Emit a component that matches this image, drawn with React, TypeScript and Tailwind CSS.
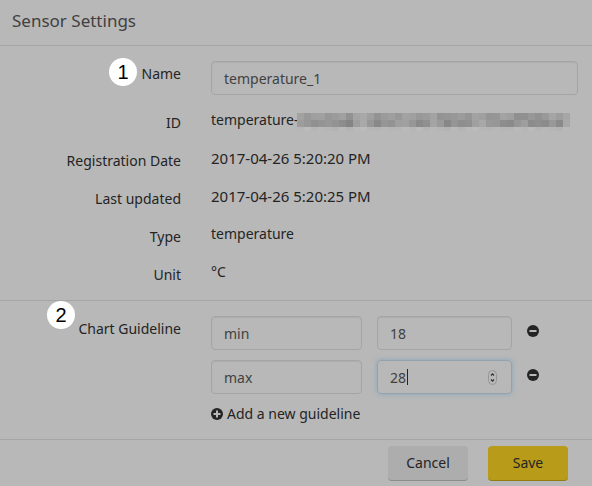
import type { ReactNode } from "react";

const MOSAIC_TOP = "a2 99 9f a0 97 9b a0 91 a4 a8 9f 93 9b 9f 98 a2 a0 98 9b a3 93 95 98 9c 95 a2 9f 95 96 a3 9f 8f 90 98 92 99 a5 9d a6".split(" ");
const MOSAIC_BOTTOM = "9d 97 90 94 97 93 8d 84 9e a9 97 89 96 93 9f a0 97 8a 90 a4 9a 87 95 8e 90 a0 a8 99 97 8d 8a 96 9e 8c 8f 8b 98 8a a8".split(" ");
const MOSAIC_FADE = "b6 bb b5 b8 b6 b3 b9 b4 b9 bb b6 b5 b8 b5 b6 ba".split(" ");

const fieldClass =
  "block h-[34px] w-full min-w-0 appearance-none rounded border border-[#a5a5a5] bg-transparent px-3 text-sm text-[#414141] shadow-[inset_0_1px_1px_rgba(0,0,0,0.06)] outline-none [&::-webkit-inner-spin-button]:appearance-none";

function Badge({ children, className }: { children: ReactNode; className: string }) {
  return (
    <span
      className={`absolute flex size-7 items-center justify-center rounded-full bg-white font-['Liberation_Sans',sans-serif] text-xl text-black ${className}`}
    >
      {children}
    </span>
  );
}

function InfoRow({ label, children }: { label: string; children: ReactNode }) {
  return (
    <div className="mb-[15px] flex gap-[30px]">
      <dt className="w-[181px] shrink-0 pt-[3px] text-right">{label}</dt>
      <dd className="flex min-w-0 flex-1">{children}</dd>
    </div>
  );
}

function RedactedText() {
  return (
    <svg className="mt-[3px] -ml-0.5 h-[18px] w-[273px] shrink-0" viewBox="0 0 273 18" shapeRendering="crispEdges" aria-hidden="true">
      {MOSAIC_TOP.map((_, i) => (
        <g key={i}>
          <rect x={i * 7} y="0" width="7" height="7" fill={`#${MOSAIC_TOP[i].repeat(3)}`} />
          <rect x={i * 7} y="7" width="7" height="7" fill={`#${MOSAIC_BOTTOM[i].repeat(3)}`} />
          <rect x={i * 7} y="14" width="7" height="4" fill={`#${MOSAIC_FADE[i % 16].repeat(3)}`} />
        </g>
      ))}
    </svg>
  );
}

function CircleIcon({ plus = false }: { plus?: boolean }) {
  return (
    <svg className="size-3 shrink-0" viewBox="0 0 12 12" aria-hidden="true">
      <circle cx="6" cy="6" r="6" fill="#242424" />
      <rect x="2.5" y="5" width="7" height="2" fill="#b8b8b8" />
      {plus && <rect x="5" y="2.5" width="2" height="7" fill="#b8b8b8" />}
    </svg>
  );
}

function RemoveButton({ name }: { name: string }) {
  return (
    <button type="button" aria-label={`Remove ${name}`} className="flex h-[30px] items-center self-start">
      <CircleIcon />
    </button>
  );
}

export default function App() {
  return (
    <form className="min-h-screen bg-[#b8b8b8] font-['Noto_Sans','Open_Sans',sans-serif] text-sm/5 text-[#242424]">
      <header className="border-b border-[#a5a5a5] px-3 pt-[7px] pb-2.5">
        <h1 className="text-[17px]/7 text-[#414141]">Sensor Settings</h1>
      </header>

      <section className="relative border-b border-[#a5a5a5] pt-[15px] pr-3.5">
        <Badge className="top-3 left-[109px]">1</Badge>
        <div className="mb-[15px] flex gap-[30px]">
          <label htmlFor="name" className="w-[181px] shrink-0 pt-[3px] text-right">
            Name
          </label>
          <div className="min-w-0 flex-1">
            <input id="name" type="text" defaultValue="temperature_1" className={fieldClass} />
          </div>
        </div>
        <dl>
          <InfoRow label="ID">
            <span>temperature-</span>
            <RedactedText />
          </InfoRow>
          <InfoRow label="Registration Date">
            <time className="text-[15px]">2017-04-26 5:20:20 PM</time>
          </InfoRow>
          <InfoRow label="Last updated">
            <time className="text-[15px]">2017-04-26 5:20:25 PM</time>
          </InfoRow>
          <InfoRow label="Type">temperature</InfoRow>
          <InfoRow label="Unit">°C</InfoRow>
        </dl>
      </section>

      <section className="relative flex gap-[30px] border-b border-[#a5a5a5] pt-[15px] pr-3.5 pb-[15px]">
        <Badge className="top-0 left-[47px]">2</Badge>
        <h2 className="w-[181px] shrink-0 pt-[3px] text-right">Chart Guideline</h2>
        <div className="min-w-0 flex-1">
          <div className="grid grid-cols-[151fr_135fr_51fr] gap-x-[15px] gap-y-2.5">
            <input type="text" aria-label="First guideline name" defaultValue="min" className={fieldClass} />
            <input type="number" aria-label="First guideline value" defaultValue="18" className={fieldClass} />
            <RemoveButton name="min" />
            <input type="text" aria-label="Second guideline name" defaultValue="max" className={fieldClass} />
            <div className="relative">
              <input
                type="number"
                aria-label="Second guideline value"
                defaultValue="28"
                className="block h-[34px] w-full min-w-0 appearance-none rounded border border-[#94a2ad] bg-transparent px-3 text-sm text-[#414141] shadow-[0_0_5px_rgba(102,155,195,0.6)] outline-none [&::-webkit-inner-spin-button]:appearance-none"
              />
              <span className="absolute top-[9px] left-[30px] h-4 w-px bg-[#242424]" />
              <svg className="absolute top-2.5 right-[15px] h-[15px] w-[9px]" viewBox="0 0 9 15" fill="none" aria-hidden="true">
                <rect x="0.5" y="0.5" width="8" height="14" rx="4" stroke="#969696" />
                <path d="M3 5.5 4.5 3.8 6 5.5M3 9.5l1.5 1.7L6 9.5" stroke="#303030" strokeWidth="1.2" />
              </svg>
            </div>
            <RemoveButton name="max" />
          </div>
          <button type="button" className="mt-2.5 flex items-center gap-1">
            <CircleIcon plus />
            Add a new guideline
          </button>
        </div>
      </section>

      <footer className="flex justify-end gap-5 pt-1.5 pr-6 pb-[5px]">
        <button type="button" className="h-[35px] w-20 rounded border-b border-[#8c8c8c] bg-[#adadad]">
          Cancel
        </button>
        <button type="submit" className="h-[35px] w-20 rounded border-b border-[#927b13] bg-[#b89b18]">
          Save
        </button>
      </footer>
    </form>
  );
}
